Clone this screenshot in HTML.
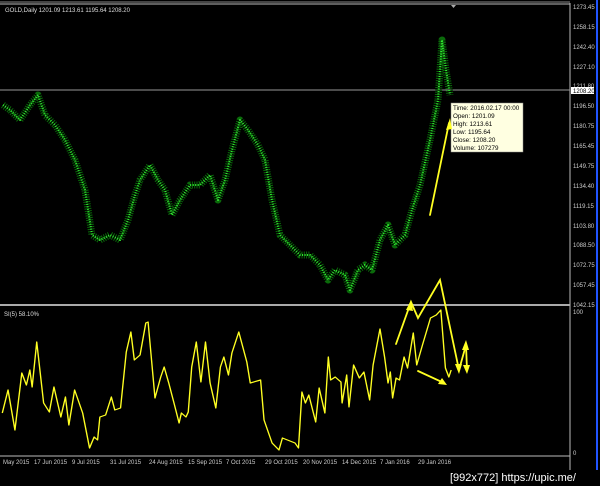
<!DOCTYPE html>
<html><head><meta charset="utf-8"><style>
html,body{margin:0;padding:0;background:#000;width:600px;height:486px;overflow:hidden}
svg{display:block}
text{font-family:"Liberation Sans",sans-serif}
</style></head><body>
<svg width="600" height="486" viewBox="0 0 600 486" xmlns="http://www.w3.org/2000/svg">
<rect width="600" height="486" fill="#000"/>
<line x1="0" y1="2" x2="570" y2="2" stroke="#888" stroke-width="1"/>
<line x1="0" y1="4" x2="570" y2="4" stroke="#bbb" stroke-width="1"/>
<line x1="570" y1="3" x2="570" y2="470" stroke="#bbb" stroke-width="1"/>
<line x1="0" y1="305" x2="570" y2="305" stroke="#aaa" stroke-width="2"/>
<line x1="0" y1="456" x2="570" y2="456" stroke="#bbb" stroke-width="1"/>
<line x1="597" y1="0" x2="597" y2="470" stroke="#2255ff" stroke-width="2"/>
<polygon points="451,5 456,5 453.5,8" fill="#aaa"/>
<g font-size="6" fill="#ccc">
<text x="573" y="9">1273.45</text><text x="573" y="29">1258.15</text><text x="573" y="49">1242.40</text>
<text x="573" y="69">1227.10</text><text x="573" y="88">1211.80</text><text x="573" y="108">1196.50</text>
<text x="573" y="128">1180.75</text><text x="573" y="148">1165.45</text><text x="573" y="168">1149.75</text>
<text x="573" y="188">1134.40</text><text x="573" y="208">1119.15</text><text x="573" y="228">1103.80</text>
<text x="573" y="247">1088.50</text><text x="573" y="267">1072.75</text><text x="573" y="287">1057.45</text>
<text x="573" y="307">1042.15</text><text x="573" y="314">100</text><text x="573" y="455">0</text>
</g>
<rect x="571" y="87" width="23" height="7" fill="#fff"/>
<text x="573" y="93" font-size="6" fill="#000">1208.20</text>
<line x1="0" y1="90" x2="570" y2="90" stroke="#999" stroke-width="1"/>
<text x="5" y="12" font-size="6" fill="#ddd">GOLD,Daily  1201.09 1213.61 1195.64 1208.20</text>
<text x="4" y="316" font-size="6" fill="#ddd">SI(5) 58.10%</text>
<polyline fill="none" stroke="#0a6a0a" stroke-width="7" stroke-dasharray="1 1.3" stroke-linejoin="round" points="3,105 10,110 20,120 30,105 38,95 45,115 55,125 65,140 75,160 85,190 92,235 100,240 110,235 120,240 128,220 135,195 140,180 150,165 158,180 165,190 172,215 180,200 190,185 200,185 210,175 218,200 225,180 232,150 240,120 248,130 258,145 265,160 272,200 280,235 290,245 300,255 310,255 320,265 328,280 335,270 345,275 350,290 358,270 365,265 372,270 380,240 388,225 395,245 405,235 412,210 420,185 430,140 438,100 442,40 446,70 450,95"/>
<polyline fill="none" stroke="#33ee33" stroke-width="2" stroke-dasharray="1 1.5" stroke-linejoin="round" points="3,105 10,110 20,120 30,105 38,95 45,115 55,125 65,140 75,160 85,190 92,235 100,240 110,235 120,240 128,220 135,195 140,180 150,165 158,180 165,190 172,215 180,200 190,185 200,185 210,175 218,200 225,180 232,150 240,120 248,130 258,145 265,160 272,200 280,235 290,245 300,255 310,255 320,265 328,280 335,270 345,275 350,290 358,270 365,265 372,270 380,240 388,225 395,245 405,235 412,210 420,185 430,140 438,100 442,40 446,70 450,95"/>
<rect x="451" y="103" width="72" height="49" fill="#ffffe1" stroke="#888" stroke-width="0.5"/>
<g font-size="6.3" fill="#000">
<text x="453" y="110">Time: 2016.02.17 00:00</text><text x="453" y="118">Open: 1201.09</text>
<text x="453" y="126">High: 1213.61</text><text x="453" y="134">Low:  1195.64</text>
<text x="453" y="142">Close: 1208.20</text><text x="453" y="150">Volume: 107279</text>
</g>
<g transform="scale(1.148,1)">
<polyline fill="none" stroke="#ffff22" stroke-width="1.2" stroke-linejoin="round" points="2,413 7,390 13,430 19,373 23,385 26,370 28,387 32,342 38,403 43,412 47,387 53,417 57,397 60,425 65,390 72,413 78,448 82,437 85,440 87,417 92,415 97,397 100,410 105,408 110,352 114,332 117,360 122,355 127,323 129,322 135,398 140,377 143,367 147,383 152,405 156,423 158,413 162,417 164,412 167,367 171,342 175,382 179,342 183,383 188,408 192,367 195,357 199,375 202,353 208,332 215,362 218,383 227,380 230,420 237,443 243,450 246,438 257,443 260,448 263,392 266,403 269,395 275,422 278,388 283,413 286,357 288,380 292,377 297,382 298,403 302,375 304,407 308,365 313,378 317,372 322,400 325,365 331,329 335,357 338,383 340,372 342,398 345,378 348,380 352,357 355,368 360,333 363,365 368,345 375,318 380,315 384,310 388,368 391,377 393,370"/>
</g>
<g stroke="#ffff22" stroke-width="1.8" fill="none" stroke-linecap="round">
<line x1="430" y1="215" x2="449" y2="123"/>
<polyline points="396,344 411,302 418,318 440,280 459,370 466,345"/>
<line x1="466" y1="345" x2="467" y2="370"/>
<line x1="418" y1="371" x2="444" y2="383"/>
</g>
<g fill="#ffff22">
<polygon points="450,118 446,130 452,129"/>
<polygon points="411,300 406,310 413,311"/>
<polygon points="459,374 455,364 462,364"/>
<polygon points="466,340 462,350 469,350"/>
<polygon points="467,374 463,365 470,365"/>
<polygon points="447,385 438,384 442,378"/>
</g>
<g font-size="6" fill="#ccc">
<text x="3" y="464">May 2015</text><text x="34" y="464">17 Jun 2015</text><text x="72" y="464">9 Jul 2015</text>
<text x="110" y="464">31 Jul 2015</text><text x="149" y="464">24 Aug 2015</text><text x="188" y="464">15 Sep 2015</text>
<text x="226" y="464">7 Oct 2015</text><text x="265" y="464">29 Oct 2015</text><text x="303" y="464">20 Nov 2015</text>
<text x="342" y="464">14 Dec 2015</text><text x="380" y="464">7 Jan 2016</text><text x="418" y="464">29 Jan 2016</text>
</g>
<text x="450" y="481" font-size="11" fill="#fff" font-family="Liberation Mono,monospace">[992x772] https://upic.me/</text>
</svg>
</body></html>
